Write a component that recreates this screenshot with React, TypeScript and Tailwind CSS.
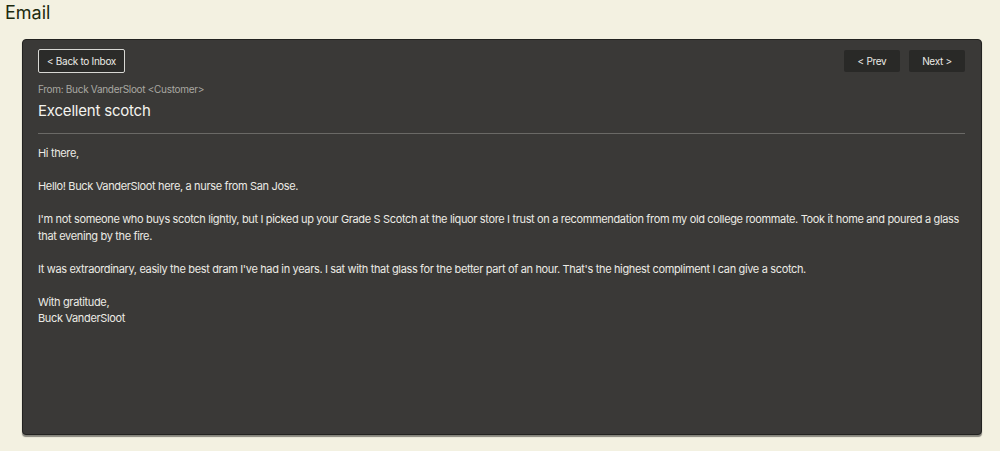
const paragraphs = [
  ["Hi there,"],
  ["Hello! Buck VanderSloot here, a nurse from San Jose."],
  [
    "I'm not someone who buys scotch lightly, but I picked up your Grade S Scotch at the liquor store I trust on a recommendation from my old college roommate. Took it home and poured a glass that evening by the fire.",
  ],
  [
    "It was extraordinary, easily the best dram I've had in years. I sat with that glass for the better part of an hour. That's the highest compliment I can give a scotch.",
  ],
  ["With gratitude,", "Buck VanderSloot"],
];

export default function App() {
  return (
    <div className="min-h-[451px] bg-[#f3f1e1] font-['Inter',sans-serif]">
      <h1 className="px-[5px] pt-[1px] text-[18px] leading-[24px] text-[#1c2a0e]">Email</h1>

      <div className="ml-[22px] mr-[18px] mt-[14px] h-[396px] rounded-[4px] border border-[#222220] bg-[#3a3937] pl-[15px] pr-[16px] pt-[9px] shadow-[0_2px_1px_rgba(0,0,0,0.45)]">
        <div className="flex items-center justify-between">
          <button className="h-[24px] rounded-[2px] border border-[#d8d8d4] bg-[#2b2b29] px-[8px] text-[10px] tracking-[-0.3px] text-[#ecebe6]">
            &lt; Back to Inbox
          </button>
          <div className="flex gap-[9px]">
            <button className="h-[22px] w-[56px] rounded-[2px] bg-[#292927] text-[10px] tracking-[-0.3px] text-[#ecebe6]">
              &lt; Prev
            </button>
            <button className="h-[22px] w-[56px] rounded-[2px] bg-[#292927] text-[10px] tracking-[-0.3px] text-[#ecebe6]">
              Next &gt;
            </button>
          </div>
        </div>

        <div className="mt-[9px] text-[10px] leading-[14px] tracking-[-0.3px] text-[#a9a8a2]">
          From: Buck VanderSloot &lt;Customer&gt;
        </div>
        <h2 className="mt-[4px] text-[15px] leading-[21px] tracking-[-0.2px] text-[#f4f3ee]">Excellent scotch</h2>
        <div className="mt-[12px] border-t border-[#6a6966]" />

        <div className="mt-[11px] flex flex-col gap-[16.5px] text-[11px] leading-[16.5px] tracking-[-0.35px] text-[#ecebe5]">
          {paragraphs.map((lines, i) => (
            <p key={i}>
              {lines.map((l, j) => (
                <span key={j} className="block">
                  {l}
                </span>
              ))}
            </p>
          ))}
        </div>
      </div>
    </div>
  );
}
